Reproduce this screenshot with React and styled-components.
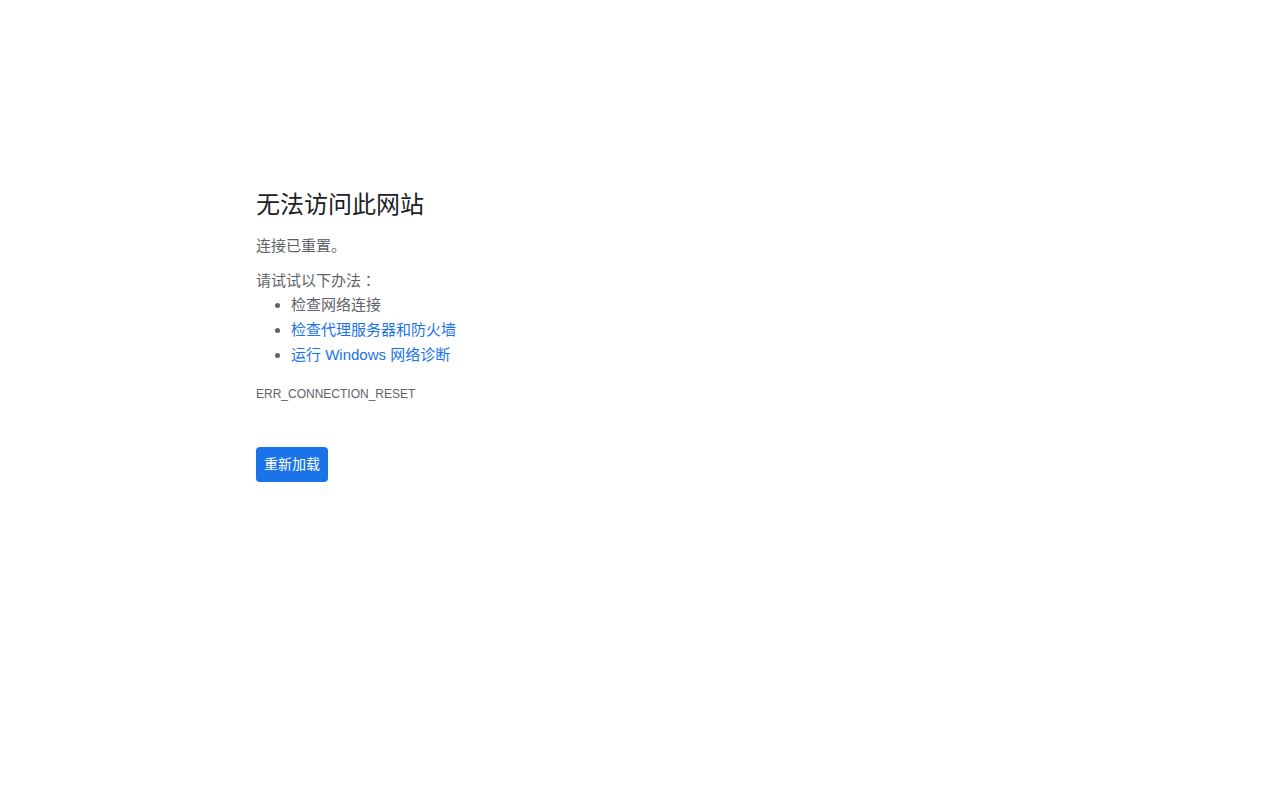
import React from "react";
import styled, { createGlobalStyle } from "styled-components";

const Global = createGlobalStyle`
  html, body { margin: 0; padding: 0; background: #fff; }
  body { font-family: "Liberation Sans", "Noto Sans CJK SC", sans-serif; }
`;

const Page = styled.div`
  padding: 190px 0 0 256px;
  color: #5f6368;
  font-size: 15px;
`;

const Title = styled.h1`
  margin: 0 0 13px;
  font-size: 24px;
  font-weight: 400;
  line-height: 30px;
  color: #202124;
`;

const Para = styled.p`
  margin: 0 0 ${(p) => p.$mb || 0}px;
  padding-top: ${(p) => p.$pt || 0}px;
  line-height: ${(p) => p.$lh || 25}px;
`;

const Colon = styled.span`
  font-family: "Noto Sans CJK JP", sans-serif;
  line-height: 1;
`;

const List = styled.ul`
  margin: 0;
  padding-left: 35px;
  line-height: 25px;
`;

const Item = styled.li``;

const Link = styled.a`
  color: #1a73e8;
  text-decoration: none;
`;

const Code = styled.div`
  margin-top: 20px;
  font-size: 12px;
  line-height: 15px;
  color: #5f6368;
`;

const Button = styled.button`
  margin-top: 45px;
  display: block;
  height: 35px;
  padding: 0 8px 1px;
  border: none;
  border-radius: 4px;
  background: #1a73e8;
  color: #fff;
  font-family: "Liberation Sans", "Noto Sans CJK SC", sans-serif;
  font-size: 14px;
  line-height: 20px;
  cursor: pointer;
`;

export default function App() {
  return (
    <>
      <Global />
      <Page>
        <Title>无法访问此网站</Title>
        <Para $mb={10}>连接已重置。</Para>
        <Para $lh={22} $pt={2}>
          请试试以下办法<Colon>：</Colon>
        </Para>
        <List>
          <Item>检查网络连接</Item>
          <Item>
            <Link href="#">检查代理服务器和防火墙</Link>
          </Item>
          <Item>
            <Link href="#">运行 Windows 网络诊断</Link>
          </Item>
        </List>
        <Code>ERR_CONNECTION_RESET</Code>
        <Button>重新加载</Button>
      </Page>
    </>
  );
}
